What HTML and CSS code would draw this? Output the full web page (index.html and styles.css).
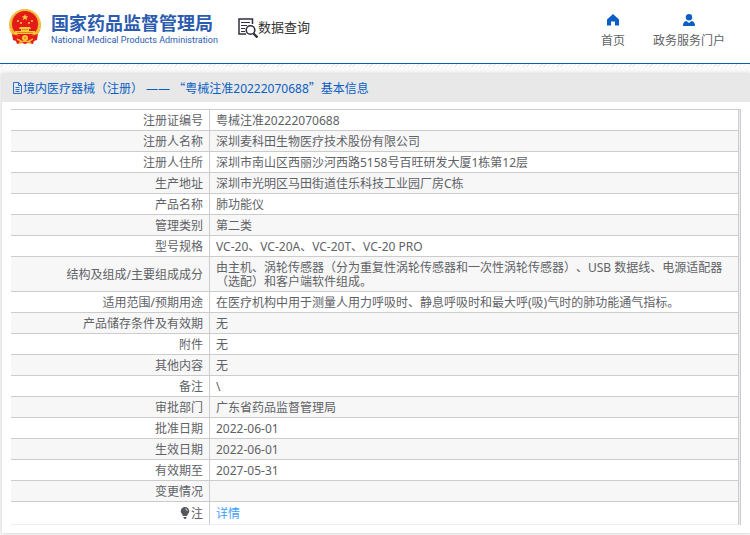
FILE: index.html
```html
<!DOCTYPE html>
<html lang="zh-CN">
<head>
<meta charset="utf-8">
<meta name="viewport" content="width=device-width, initial-scale=1">
<title>国家药品监督管理局 数据查询</title>
<link rel="stylesheet" href="styles.css">
</head>
<body>
<header class="site-header">
  <div class="brand">
    <svg class="emblem" viewBox="0 0 32 36" aria-hidden="true">
      <circle cx="16" cy="16" r="16" fill="#efb52c"/>
      <circle cx="16" cy="16" r="15" fill="none" stroke="#f7cf62" stroke-width="1" stroke-dasharray="2 1"/>
      <circle cx="16" cy="15" r="13" fill="#e31a18"/>
      <path fill="#f6ca45" d="m16 5 1 2.200 2.400.1-1.900 1.500.7 2.400-2.200-1.400-2.200 1.400.7-2.400-1.900-1.500 2.400-.1z"/>
      <g fill="#f6ca45"><circle cx="9" cy="12" r="1"/><circle cx="12" cy="14" r="1"/><circle cx="20" cy="14" r="1"/><circle cx="23" cy="12" r="1"/></g>
      <path fill="#f8ca3d" d="M11 18h10l1 2h-2v2h6l1 3H5l1-3h6v-2h-2z"/>
      <path stroke="#e9801f" stroke-width="1" d="M8 23.500h16M13 20.500h6"/>
      <path fill="#e51d18" d="M3 25c6 2 9 2 13 1 4 1 7 1 13-1l-1 6-3 1-1 3-5-1-3 1-3-1-5 1-1-3-3-1z"/>
      <circle cx="16" cy="29" r="3" fill="#f6c53b"/>
      <circle cx="16" cy="29" r="1" fill="#e9801f"/>
      <path fill="none" stroke="#f1b932" stroke-width="1.500" d="m8 30 4 2-2 3M24 30l-4 2 2 3M12 33l4-1 4 1"/>
    </svg>
    <div class="brand-text">
      <div class="brand-name">国家药品监督管理局</div>
      <div class="brand-en">National Medical Products Administration</div>
    </div>
  </div>
  <div class="section">
    <svg class="section-icon" viewBox="0 0 20 20" fill="none" stroke="#30303c" aria-hidden="true">
      <path stroke-width="1.500" d="M14.500 6V1H1v15h7"/>
      <path d="M3 4.500h9M3 7.500h6M3 10.500h4M3 13.500h4"/>
      <circle cx="12.500" cy="12" r="4.300" stroke-width="1.600"/>
      <path stroke-width="2.400" d="m15.500 15.500 4 4"/>
    </svg>
    <span>数据查询</span>
  </div>
  <nav class="nav">
    <a href="#home"><svg viewBox="0 0 12 12" aria-hidden="true"><path fill="#0a5fc4" d="M6 0 0 5.500V11.500h4V7.500h4v4h4v-6z"/></svg>首页</a>
    <a href="#portal"><svg viewBox="0 0 12 12" aria-hidden="true"><circle cx="6" cy="3.200" r="3.200" fill="#0a5fc4"/><path fill="#0a5fc4" d="M0 12c0-3 1-4.500 3.500-5L6 9l2.500-2c2.500.5 3.500 2 3.500 5z"/></svg>政务服务门户</a>
  </nav>
</header>
<main class="page">
  <section class="card">
    <h1 class="card-title">
      <svg viewBox="0 0 11 12" fill="none" stroke="#2b6fca" aria-hidden="true"><path d="M1.500.5h5l3 3v8h-8zM6.500.5v3h3M3.500 5.500h4M3.500 7.500h4M3.500 9.500h4"/></svg>
      <span>境内医疗器械（注册） ——&nbsp;<span class="quote">“</span>粤械注准20222070688<span class="quote">”</span>基本信息</span>
    </h1>
    <div class="card-body">
      <table class="details">
        <colgroup><col class="label-col"><col></colgroup>
        <tbody>
          <tr><th scope="row">注册证编号</th><td>粤械注准20222070688</td></tr>
          <tr><th scope="row">注册人名称</th><td>深圳麦科田生物医疗技术股份有限公司</td></tr>
          <tr><th scope="row">注册人住所</th><td>深圳市南山区西丽沙河西路5158号百旺研发大厦1栋第12层</td></tr>
          <tr><th scope="row">生产地址</th><td>深圳市光明区马田街道佳乐科技工业园厂房C栋</td></tr>
          <tr><th scope="row">产品名称</th><td>肺功能仪</td></tr>
          <tr><th scope="row">管理类别</th><td>第二类</td></tr>
          <tr><th scope="row">型号规格</th><td>VC-20、VC-20A、VC-20T、VC-20 PRO</td></tr>
          <tr><th scope="row">结构及组成/主要组成成分</th><td>由主机、涡轮传感器（分为重复性涡轮传感器和一次性涡轮传感器）、USB 数据线、电源适配器（选配）和客户端软件组成。</td></tr>
          <tr><th scope="row">适用范围/预期用途</th><td>在医疗机构中用于测量人用力呼吸时、静息呼吸时和最大呼(吸)气时的肺功能通气指标。</td></tr>
          <tr><th scope="row">产品储存条件及有效期</th><td>无</td></tr>
          <tr><th scope="row">附件</th><td>无</td></tr>
          <tr><th scope="row">其他内容</th><td>无</td></tr>
          <tr><th scope="row">备注</th><td>\</td></tr>
          <tr><th scope="row">审批部门</th><td>广东省药品监督管理局</td></tr>
          <tr><th scope="row">批准日期</th><td>2022-06-01</td></tr>
          <tr><th scope="row">生效日期</th><td>2022-06-01</td></tr>
          <tr><th scope="row">有效期至</th><td>2027-05-31</td></tr>
          <tr><th scope="row">变更情况</th><td></td></tr>
          <tr class="note"><th scope="row"><svg viewBox="0 0 10 12" aria-hidden="true"><path fill="#55575c" d="M5 0a4.300 4.300 0 0 0-4.300 4.300C.7 6.300 2.500 7 3 9h4c.5-2 2.300-2.700 2.300-4.700A4.300 4.300 0 0 0 5 0zM3.500 10h3v1l-1 1h-1l-1-1z"/><path fill="none" stroke="#fff" d="M5.500 2c1 0 1.700.8 1.700 1.800"/></svg>注</th><td><a href="#detail">详情</a></td></tr>
        </tbody>
      </table>
    </div>
  </section>
</main>
</body>
</html>
```
FILE: styles.css
```css
* {
  box-sizing: border-box;
}

body {
  margin: 0;
  background: #f5f5f5;
  color: #606266;
  font: 12px/14px "Noto Sans", "Noto Sans CJK SC", sans-serif;
  text-spacing-trim: space-all;
}

a {
  color: inherit;
  text-decoration: none;
}

.site-header {
  display: flex;
  align-items: flex-start;
  height: 64px;
  padding: 9px 25px 0 9px;
  border-bottom: 1px solid #0a5fb4;
  background: #fff;
}

.brand {
  display: flex;
  gap: 10px;
}

.emblem {
  width: 32px;
  height: 36px;
}

.brand-text {
  padding-top: 2px;
  color: #2b5caf;
  white-space: nowrap;
}

.brand-name {
  font: bold 18px/22px "Noto Sans CJK SC", sans-serif;
}

.brand-en {
  font: 9px/14px Roboto, sans-serif;
}

.section {
  display: flex;
  align-items: center;
  margin-left: 20px;
  padding-top: 6px;
  color: #333;
  font-size: 13px;
  line-height: 20px;
}

.section-icon {
  width: 20px;
  height: 20px;
  margin-top: 3px;
}

.nav {
  display: flex;
  gap: 28px;
  margin-left: auto;
  padding-top: 5px;
}

.nav a {
  display: flex;
  flex-direction: column;
  align-items: center;
  gap: 8px;
}

.nav svg {
  width: 12px;
  height: 12px;
}

.page {
  padding: 10px 0 3px 2px;
  background: repeating-linear-gradient(135deg, #fff 0 2px, #ececec 2px 3px) 0 0 / 100% 3px no-repeat, linear-gradient(#fff, #f5f5f5 10px);
}

.card {
  background: #fff;
  box-shadow: 0 0 4px rgba(0, 0, 0, 0.15);
}

.card-title {
  display: flex;
  align-items: center;
  height: 28px;
  margin: 0;
  padding-left: 10px;
  background: #e8e8e8;
  color: #0a5fc4;
  font-size: 12px;
  font-weight: normal;
}

.card-title svg {
  width: 11px;
  height: 12px;
}

.quote {
  font-family: "Noto Sans CJK SC", sans-serif;
}

.card-body {
  padding: 7px 9px 8px;
}

.details {
  width: 100%;
  border-spacing: 0;
  border-top: 1px solid #ccc;
  border-right: 1px solid #ccc;
  padding-right: 1px;
  background: #ebeef5;
  table-layout: fixed;
}

.label-col {
  width: 199px;
}

.details tr {
  background: #fff;
}

.details tr:nth-child(even) {
  background: #f7f7f7;
}

.details th,
.details td {
  height: 21px;
  padding: 4px 6px 2px;
  border-right: 1px solid #ccc;
  border-bottom: 1px solid #ccc;
  font-weight: normal;
  text-align: left;
  vertical-align: middle;
}

.details th {
  padding-left: 0;
  text-align: right;
}

.details .note th,
.details .note td {
  height: 23px;
  border-bottom-color: #ebeef5;
}

.note svg {
  width: 10px;
  height: 12px;
  margin-right: 1px;
  vertical-align: -1px;
}

.note a {
  color: #409eff;
}
```
